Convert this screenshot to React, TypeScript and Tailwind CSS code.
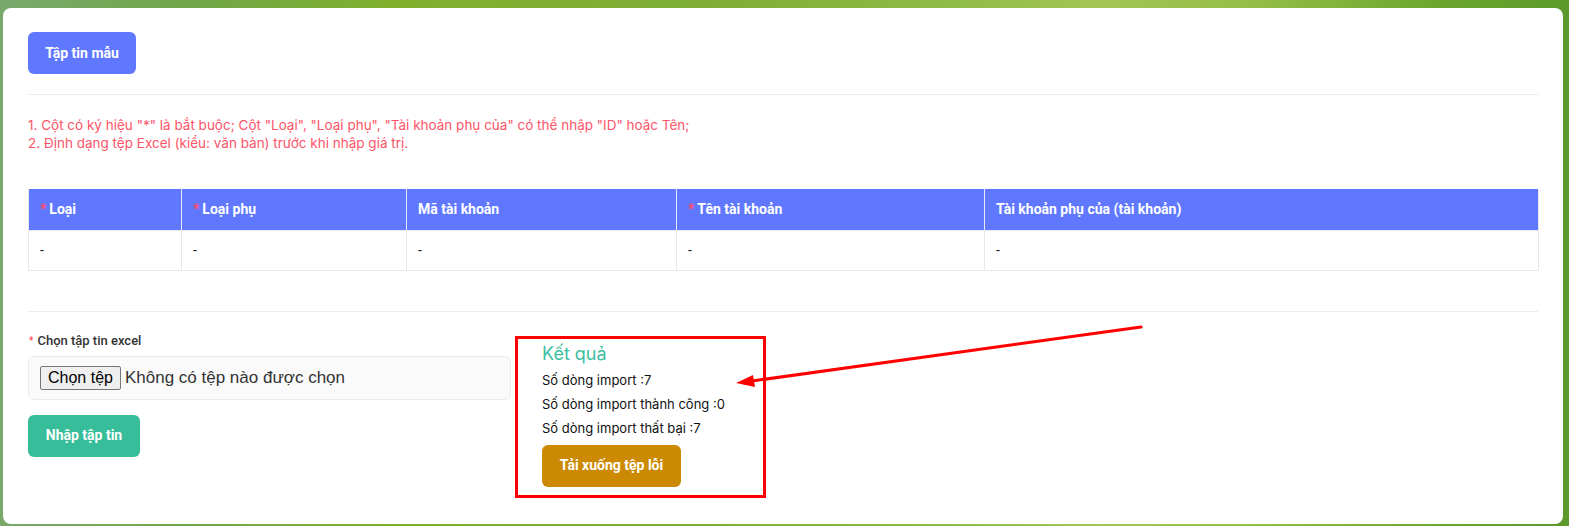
import React from "react";

const cols = [
  { label: "Loại", req: true, w: "w-[153px]" },
  { label: "Loại phụ", req: true, w: "w-[225px]" },
  { label: "Mã tài khoản", req: false, w: "w-[270px]" },
  { label: "Tên tài khoản", req: true, w: "w-[308px]" },
  { label: "Tài khoản phụ của (tài khoản)", req: false, w: "" },
];

export default function App() {
  return (
    <div className="relative w-[1569px] h-[526px] overflow-hidden bg-[linear-gradient(90deg,#7aa86c_0%,#72a64a_12%,#7fb02c_25%,#7eae36_45%,#8dbb45_60%,#a3c556_70%,#93be45_80%,#6ba52e_92%,#5b9a2a_100%)] pt-[8px] pl-[3px] font-['Roboto',sans-serif]">
      <div className="w-[1560px] h-[516px] bg-white rounded-[8px] px-[25px] pt-[24px]">
        <button className="h-[42px] w-[108px] rounded-[6px] bg-[#6078ff] text-white text-[14px] font-bold">
          Tập tin mẫu
        </button>
        <div className="mt-[20px] border-t border-[#ececec]" />
        <div className="mt-[21px] text-[13.5px] leading-[18px] text-[#fd5468] font-['Inter',sans-serif]">
          <div>1. Cột có ký hiệu "*" là bắt buộc; Cột "Loại", "Loại phụ", "Tài khoản phụ của" có thể nhập "ID" hoặc Tên;</div>
          <div>2. Định dạng tệp Excel (kiểu: văn bản) trước khi nhập giá trị.</div>
        </div>
        <table className="mt-[37px] w-[1511px] table-fixed border-collapse text-[14px]">
          <thead>
            <tr className="bg-[#6078ff] h-[41px]">
              {cols.map((c, i) => (
                <th
                  key={i}
                  className={`${c.w} text-left font-bold text-white pl-[11px] border-x border-[#e6e8ff] first:border-l-[#e8e8e8] last:border-r-[#e8e8e8]`}
                >
                  {c.req && <span className="text-[#ff4d6d] mr-[3px]">*</span>}
                  {c.label}
                </th>
              ))}
            </tr>
          </thead>
          <tbody>
            <tr className="h-[40px]">
              {cols.map((c, i) => (
                <td key={i} className="pl-[11px] border border-[#e8e8e8] text-[#222]">
                  -
                </td>
              ))}
            </tr>
          </tbody>
        </table>
        <div className="mt-[40px] border-t border-[#ececec]" />
        <div className="flex mt-[21px]">
          <div className="w-[483px]">
            <div className="flex items-center text-[13px] font-medium text-[#333] leading-[16px] pl-[1px]">
              <span className="text-[#ff4d4f] text-[10px] mr-[4px]">*</span>
              Chọn tập tin excel
            </div>
            <label className="mt-[7px] h-[44px] flex items-center rounded-[6px] border border-[#e9ecef] bg-[#fafafa] pl-[11px] cursor-pointer">
              <input type="file" className="hidden" />
              <span className="h-[24px] px-[7px] flex items-center rounded-[2px] border border-[#767676] bg-[#efefef] text-[16px] text-black font-['Liberation_Sans',sans-serif]">
                Chọn tệp
              </span>
              <span className="ml-[4px] text-[17px] text-[#333] font-['Liberation_Sans',sans-serif]">
                Không có tệp nào được chọn
              </span>
            </label>
            <button className="mt-[15px] h-[42px] w-[112px] rounded-[6px] bg-[#38bd9b] text-white text-[14px] font-bold">
              Nhập tập tin
            </button>
          </div>
          <div className="ml-[4px] w-[251px] h-[162px] border-[3px] border-[#ff0000] mt-[3px] pl-[24px] pt-[3px] font-['Inter',sans-serif]">
            <div className="text-[18px] leading-[24px] text-[#3cbf9f]">Kết quả</div>
            <div className="mt-[2px] text-[13px] leading-[24px] text-[#111]">
              <div>Số dòng import :7</div>
              <div>Số dòng import thành công :0</div>
              <div>Số dòng import thất bại :7</div>
            </div>
            <button className="mt-[5px] h-[42px] w-[139px] rounded-[6px] bg-[#cc8a03] text-white text-[14px] font-bold font-['Roboto',sans-serif]">
              Tải xuống tệp lỗi
            </button>
          </div>
        </div>
      </div>
      <svg className="absolute left-0 top-0 pointer-events-none" width="1569" height="526">
        <line x1="1141" y1="327" x2="752" y2="381" stroke="#ff0000" strokeWidth="3" strokeLinecap="round" />
        <polygon points="736,383 753,375 755,387" fill="#ff0000" />
      </svg>
    </div>
  );
}
